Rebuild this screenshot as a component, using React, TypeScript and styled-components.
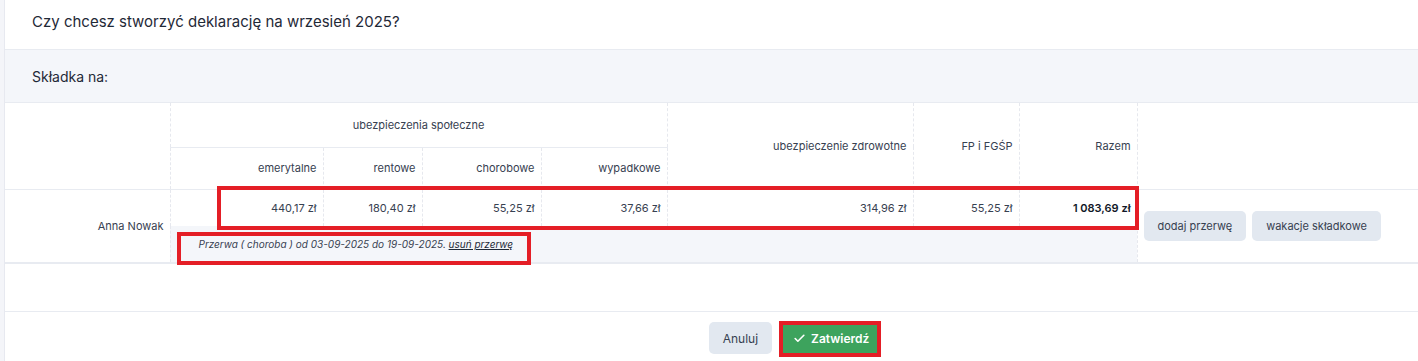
import React from "react";
import styled, { createGlobalStyle } from "styled-components";
import { Check } from "lucide-react";

const Global = createGlobalStyle`
  html, body { margin: 0; padding: 0; }
  body {
    background: #f4f5f9;
    font-family: Inter, "Noto Sans", sans-serif;
    color: #1f2937;
  }
  * { box-sizing: border-box; }
`;

const Root = styled.div`
  position: relative;
  width: 1418px;
  height: 361px;
  overflow: hidden;
`;

const Panel = styled.div`
  margin-left: 4px;
  height: 361px;
  background: #ffffff;
  border-left: 1px solid #e7e9f0;
  display: flex;
  flex-direction: column;
`;

const Title = styled.div`
  height: 50px;
  padding: 0 27px;
  display: flex;
  align-items: center;
  padding-bottom: 6px;
  font-size: 15px;
  color: #1f2937;
  border-bottom: 1px solid #e8ebf1;
`;

const SubHeader = styled.div`
  height: 53px;
  padding: 0 27px;
  display: flex;
  align-items: center;
  font-size: 14px;
  color: #1f2937;
  background: #f4f6fa;
  border-bottom: 1px solid #e8ebf1;
`;

const Table = styled.table`
  width: 1413px;
  table-layout: fixed;
  border-collapse: collapse;
  font-size: 11px;
  color: #374151;
  border-bottom: 2px solid #e8ebf1;
`;

const Th = styled.th<{ $align?: "left" | "center" | "right"; $dashed?: boolean; $solidBottom?: boolean; $h?: number }>`
  font-weight: 400;
  text-align: ${(p) => p.$align || "right"};
  padding: 0 6px;
  height: ${(p) => (p.$h ? `${p.$h}px` : "auto")};
  border-right: ${(p) => (p.$dashed ? "1px dashed #e6e8ee" : "none")};
  border-bottom: ${(p) => (p.$solidBottom ? "1px solid #e8ebf1" : "none")};
  vertical-align: middle;
  white-space: nowrap;
`;

const Td = styled.td<{ $dashed?: boolean; $bold?: boolean; $h?: number; $align?: "left" | "right" | "center" }>`
  text-align: ${(p) => p.$align || "right"};
  padding: 0 6px;
  height: ${(p) => (p.$h ? `${p.$h}px` : "auto")};
  border-right: ${(p) => (p.$dashed ? "1px dashed #e6e8ee" : "none")};
  font-weight: ${(p) => (p.$bold ? 600 : 400)};
  color: ${(p) => (p.$bold ? "#111827" : "#374151")};
  vertical-align: middle;
  white-space: nowrap;
`;

const HeadRowEnd = styled.tr`
  border-bottom: 1px solid #e8ebf1;
`;

const BreakCell = styled.td`
  background: #f4f6fa;
  height: 37px;
  padding: 0 0 0 28px;
  font-size: 10px;
  font-style: italic;
  color: #374151;
  border-right: 1px dashed #e6e8ee;
  white-space: nowrap;
`;

const Link = styled.a`
  color: #1f2937;
  text-decoration: underline;
  cursor: pointer;
`;

const Actions = styled.div`
  display: flex;
  gap: 6px;
`;

const GreyButton = styled.button`
  height: 30px;
  padding: 0 14px;
  border: none;
  border-radius: 5px;
  background: #e2e8f0;
  color: #374151;
  font-family: Inter, "Noto Sans", sans-serif;
  font-size: 11px;
  cursor: pointer;
  white-space: nowrap;
`;

const Spacer = styled.div`
  height: 48px;
  border-bottom: 1px solid #e8ebf1;
`;

const Footer = styled.div`
  display: flex;
  justify-content: center;
  gap: 10px;
  padding: 10px 0 0 165px;
`;

const CancelButton = styled(GreyButton)`
  height: 32px;
  padding: 0 14px;
  font-size: 12px;
`;

const ConfirmButton = styled.button`
  height: 32px;
  padding: 0 10px 0 11px;
  border: none;
  border-radius: 4px;
  background: #3da35d;
  color: #ffffff;
  font-family: Inter, "Noto Sans", sans-serif;
  font-size: 12px;
  font-weight: 600;
  display: flex;
  align-items: center;
  gap: 5px;
  cursor: pointer;
`;

const Highlight = styled.div`
  position: absolute;
  border: 4px solid #e41e26;
  pointer-events: none;
`;

const boxes = [
  { left: 217, top: 186, width: 922, height: 44 },
  { left: 177, top: 232, width: 354, height: 33 },
  { left: 779, top: 321, width: 102, height: 36 },
];

export default function App() {
  return (
    <Root>
      <Global />
      <Panel>
        <Title>Czy chcesz stworzyć deklarację na wrzesień 2025?</Title>
        <SubHeader>Składka na:</SubHeader>
        <Table>
          <colgroup>
            <col style={{ width: 165 }} />
            <col style={{ width: 153 }} />
            <col style={{ width: 99 }} />
            <col style={{ width: 119 }} />
            <col style={{ width: 126 }} />
            <col style={{ width: 246 }} />
            <col style={{ width: 106 }} />
            <col style={{ width: 118 }} />
            <col style={{ width: 281 }} />
          </colgroup>
          <thead>
            <tr>
              <Th rowSpan={2} $dashed />
              <Th colSpan={4} $align="center" $dashed $solidBottom $h={44}>
                ubezpieczenia społeczne
              </Th>
              <Th rowSpan={2} $dashed>ubezpieczenie zdrowotne</Th>
              <Th rowSpan={2} $dashed>FP i FGŚP</Th>
              <Th rowSpan={2} $dashed>Razem</Th>
              <Th rowSpan={2} />
            </tr>
            <HeadRowEnd>
              <Th $dashed $h={42}>emerytalne</Th>
              <Th $dashed>rentowe</Th>
              <Th $dashed>chorobowe</Th>
              <Th $dashed>wypadkowe</Th>
            </HeadRowEnd>
          </thead>
          <tbody>
            <tr>
              <Td rowSpan={2} $dashed>Anna Nowak</Td>
              <Td $dashed $h={37}>440,17 zł</Td>
              <Td $dashed>180,40 zł</Td>
              <Td $dashed>55,25 zł</Td>
              <Td $dashed>37,66 zł</Td>
              <Td $dashed>314,96 zł</Td>
              <Td $dashed>55,25 zł</Td>
              <Td $dashed $bold>1 083,69 zł</Td>
              <Td rowSpan={2} $align="left">
                <Actions>
                  <GreyButton>dodaj przerwę</GreyButton>
                  <GreyButton>wakacje składkowe</GreyButton>
                </Actions>
              </Td>
            </tr>
            <tr>
              <BreakCell colSpan={7}>
                Przerwa ( choroba ) od 03-09-2025 do 19-09-2025. <Link>usuń przerwę</Link>
              </BreakCell>
            </tr>
          </tbody>
        </Table>
        <Spacer />
        <Footer>
          <CancelButton>Anuluj</CancelButton>
          <ConfirmButton>
            <Check size={13} strokeWidth={3} />
            Zatwierdź
          </ConfirmButton>
        </Footer>
      </Panel>
      {boxes.map((b, i) => (
        <Highlight key={i} style={{ left: b.left, top: b.top, width: b.width, height: b.height }} />
      ))}
    </Root>
  );
}
